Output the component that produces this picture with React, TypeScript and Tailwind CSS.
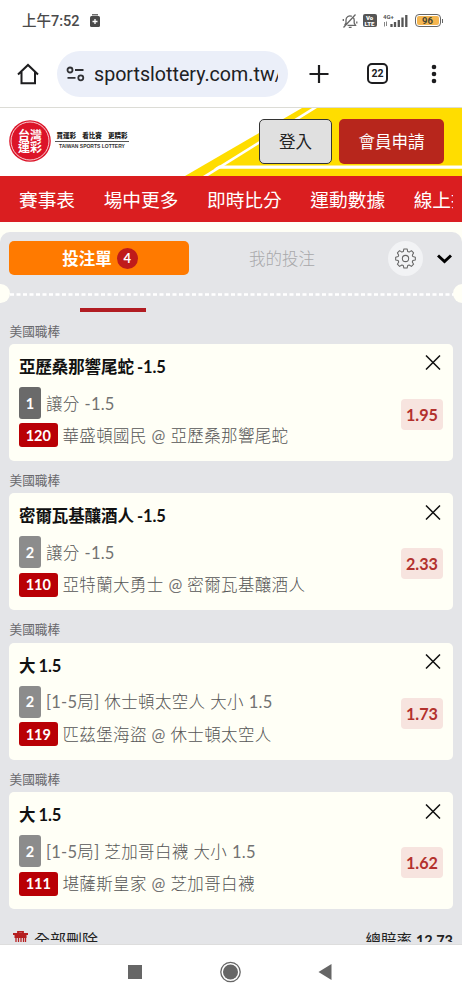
import React from "react";

const cjk = "font-['Lato','Noto_Sans_CJK_TC',sans-serif]";
const roboto = "font-['Roboto','Noto_Sans_CJK_TC',sans-serif]";

type Bet = {
  pick: string;
  code: string;
  codeColor: string;
  market: string;
  no: string;
  match: string;
  odds: string;
};

const bets: Bet[] = [
  { pick: "亞歷桑那響尾蛇 -1.5", code: "1", codeColor: "bg-[#6a6a6a]", market: "讓分 -1.5", no: "120", match: "華盛頓國民 @ 亞歷桑那響尾蛇", odds: "1.95" },
  { pick: "密爾瓦基釀酒人 -1.5", code: "2", codeColor: "bg-[#8c8c8c]", market: "讓分 -1.5", no: "110", match: "亞特蘭大勇士 @ 密爾瓦基釀酒人", odds: "2.33" },
  { pick: "大 1.5", code: "2", codeColor: "bg-[#8c8c8c]", market: "[1-5局] 休士頓太空人 大小 1.5", no: "119", match: "匹茲堡海盜 @ 休士頓太空人", odds: "1.73" },
  { pick: "大 1.5", code: "2", codeColor: "bg-[#8c8c8c]", market: "[1-5局] 芝加哥白襪 大小 1.5", no: "111", match: "堪薩斯皇家 @ 芝加哥白襪", odds: "1.62" },
];

// Light Chinese characters with regular-weight digits and signs.
function MixedText({ text }: { text: string }) {
  return (
    <span className="whitespace-pre pt-[2px] text-[16.500px] font-light tracking-[0.350px] text-[#555]">
      {text.split(/([!-~]+)/).map((part, i) =>
        i % 2 ? (
          <span key={i} className="font-normal tracking-[0.250px] text-[#727272]">{part}</span>
        ) : (
          part
        ),
      )}
    </span>
  );
}

function StatusBar() {
  return (
    <div className={`flex h-10 items-center pl-[22px] pr-[19px] pt-px text-[#4a4a4a] ${roboto}`}>
      <span className="w-[59px] whitespace-nowrap pt-[3px] text-[14.5px] font-medium leading-5">上午7:52</span>
      <svg className="ml-2 h-[14px] w-3" viewBox="0 0 12 14">
        <path d="M3 0.8h6" stroke="#4a4a4a" strokeWidth="1.2" />
        <rect x="1" y="2" width="10" height="11" rx="1.5" fill="#4a4a4a" />
        <path d="M6 5v5M3.5 7.5h5" stroke="#fff" strokeWidth="1.3" />
      </svg>
      <div className="ml-auto flex items-center">
        <svg className="h-4 w-4" viewBox="0 0 16 16" fill="none" stroke="#666" strokeWidth="1.3">
          <path d="M5.500 12.300h8l-1.300-2.300V7.200a4 4 0 0 0-1-2.700M9.800 3.300A4 4 0 0 0 4 7v2.800L2.700 12.300M6.800 14.300h2.800M1.500 14.500L13.500 1.500M14.800 8.500v2M1.300 8V6" />
        </svg>
        <div className="ml-[5px] flex h-[13px] w-[14px] flex-col items-center justify-center rounded-[2px] bg-[#555] text-[6px] font-black leading-[6px] text-white">
          <span>Vo</span>
          <span>LTE</span>
        </div>
        <svg className="ml-[6px] h-[14px] w-[25px]" viewBox="0 0 25 14">
          <text x="0" y="5" fontSize="6" fontWeight="700" fill="#555">4G+</text>
          <path d="M1.500 8v4.500M3.500 7.500v4.500" stroke="#777" strokeWidth="0.9" />
          <path d="M8.500 13v-3M12 13V8M15.800 13V6M19.500 13V3.500M23.300 13V1" stroke="#555" strokeWidth="2.300" />
        </svg>
        <div className="ml-[7px] flex h-[13px] w-[26px] items-center justify-center rounded-[4px] border-[1.5px] border-[#666] p-px">
          <div className="flex h-full w-full items-center justify-center rounded-[2px] bg-[#f5b650] text-[9.5px] font-bold leading-none text-[#443]">96</div>
        </div>
        <div className="ml-px h-1 w-[1.5px] bg-[#666]" />
      </div>
    </div>
  );
}

function BrowserBar() {
  return (
    <div className={`flex h-[68px] items-center border-b border-[#dcdcd6] text-[#202124] ${roboto}`}>
      <svg className="ml-[17px] h-[22px] w-[22px]" viewBox="0 0 22 22" fill="none" stroke="#1d1d1f" strokeWidth="2">
        <path d="M1 11.500L11 2l10 9.500M4.500 9v11.200h13.500V9" />
      </svg>
      <div className="ml-[18px] flex h-[46px] w-[231px] items-center rounded-full bg-[#ebeff9]">
        <svg className="ml-[9px] h-4 w-[19px]" viewBox="0 0 19 16" fill="none" stroke="#303134" strokeWidth="1.800">
          <circle cx="4" cy="4" r="2.500" />
          <path d="M9 4h8.500M1.500 11.800h8" />
          <circle cx="14.800" cy="11.800" r="2.500" />
        </svg>
        <span className="ml-[9px] w-[184px] overflow-hidden whitespace-nowrap pt-[2px] text-[19.650px] leading-7">sportslottery.com.tw/</span>
      </div>
      <svg className="ml-[21px] h-5 w-5" viewBox="0 0 20 20" stroke="#1d1d1f" strokeWidth="2.200">
        <path d="M10 1v18M0.500 10h19" />
      </svg>
      <div className="ml-[38px] flex h-[21px] w-[21px] items-center justify-center rounded-[5px] border-2 border-[#1d1d1f] pt-px text-[10.5px] font-bold leading-none">22</div>
      <svg className="ml-[43px] h-5 w-[6px]" viewBox="0 0 6 20" fill="#1d1d1f">
        <circle cx="3" cy="3" r="2.300" />
        <circle cx="3" cy="10" r="2.300" />
        <circle cx="3" cy="17" r="2.300" />
      </svg>
    </div>
  );
}

function Banner() {
  return (
    <header className="relative flex h-[68px] items-start bg-white">
      <svg className="absolute inset-0 h-full w-full" viewBox="0 0 462 68">
        <path d="M185 68L302 0H462V68z" fill="#ffdd00" />
        <path d="M208 68L317 0h-5L203 68z" fill="#fff" />
        <path d="M219 57.500H462v3.300H214z" fill="#fff" />
      </svg>
      <svg className="relative ml-[9px] mt-[12px] h-[42px] w-[42px] shrink-0" viewBox="0 0 42 42">
        <circle cx="21" cy="21" r="20.800" fill="#dc1428" />
        <circle cx="21" cy="21" r="19" fill="none" stroke="#fff" strokeWidth="0.800" />
        <text fill="#fff" fontFamily="Noto Sans CJK TC" fontWeight="700" fontSize="12" textAnchor="middle">
          <tspan x="21" y="19.800">台灣</tspan>
          <tspan x="21" y="32">運彩</tspan>
        </text>
      </svg>
      <div className="relative ml-[4px] mt-[22px] w-[74px]">
        <div className="flex h-[12px] items-center justify-between border-b border-[#555] px-[1.500px] font-['Noto_Sans_CJK_TC',sans-serif] text-[6.500px] font-black leading-none text-[#222]">
          <span>買運彩</span>
          <span>看比賽</span>
          <span>更精彩</span>
        </div>
        <div className="mt-[1px] whitespace-nowrap text-center font-['Liberation_Sans',sans-serif] text-[5px] font-bold leading-[7px] text-[#333]">TAIWAN SPORTS LOTTERY</div>
      </div>
      <button className={`absolute left-[259px] top-[11px] h-[45px] w-[73px] rounded-[5px] border border-[#333] bg-[#e0e0e0] pt-[2px] text-[16.500px] text-[#222] ${cjk}`}>登入</button>
      <button className={`absolute left-[339px] top-[11px] h-[45px] w-[105px] rounded-[5px] bg-[#b7261c] pt-[2px] text-[16.500px] text-white ${cjk}`}>會員申請</button>
    </header>
  );
}

function Nav() {
  return (
    <nav className={`h-[46px] bg-[#da1e20] pl-[19px] pr-[9px] ${cjk}`}>
      <div className="flex h-full items-center gap-[28.600px] overflow-hidden whitespace-nowrap pt-[3px] text-[18.700px] text-white">
        {["賽事表", "場中更多", "即時比分", "運動數據", "線上投注"].map((t) => (
          <span key={t} className="shrink-0">{t}</span>
        ))}
      </div>
    </nav>
  );
}

function BetCard({ bet }: { bet: Bet }) {
  return (
    <section>
      <h3 className="h-[32.400px] pl-[9.500px] pt-[8px] text-[12.700px] leading-[22px] text-[#68686c]">美國職棒</h3>
      <div className="ml-[9px] mr-[9.500px] flex h-[117px] rounded-[5px] bg-[#fffff6] pl-[10px]">
        <div className="flex-1">
          <div className="mt-[11px] h-6 text-[16.500px] font-bold leading-6 tracking-[-0.100px] text-[#111] [word-spacing:-0.800px]">{bet.pick}</div>
          <div className="mt-[8px] flex h-8 items-center gap-[5px]">
            <span className={`flex h-8 w-[22px] items-center justify-center rounded-[3px] pt-px text-[14.500px] font-bold text-white ${bet.codeColor}`}>{bet.code}</span>
            <MixedText text={bet.market} />
          </div>
          <div className="mt-[4.500px] flex h-6 items-center gap-[5px]">
            <span className="flex h-6 w-[38.500px] items-center justify-center rounded-[3px] bg-[#b90005] pt-px text-[14.500px] font-bold text-white">{bet.no}</span>
            <MixedText text={bet.match} />
          </div>
        </div>
        <div className="flex w-[52px] flex-col">
          <svg className="ml-[24.500px] mt-[11.500px] h-[15px] w-[16px]" viewBox="0 0 16 15" stroke="#111" strokeWidth="1.500">
            <path d="M1 0.500l14 14M15 0.500l-14 14" />
          </svg>
          <span className="ml-[0.500px] mt-[28.500px] flex h-[31px] w-[42px] items-center justify-center rounded-[4px] bg-[#f7e4df] pt-px text-[16.200px] font-bold text-[#b3312d]">{bet.odds}</span>
        </div>
      </div>
    </section>
  );
}

function SlipHeader() {
  return (
    <div className="relative">
      <div className="flex h-[61px] items-center pb-[9px] pl-[9px]">
        <button className="flex h-[34px] w-[180px] items-center justify-center gap-[5px] rounded-[5px] bg-[#ff7a00] pl-[2px] text-[16.500px] font-bold text-white">
          <span className="pt-[2px]">投注單</span>
          <span className="flex h-[21px] w-[21px] items-center justify-center rounded-full bg-[#bf1b1a] pt-px text-[13px]">4</span>
        </button>
        <span className="ml-[60px] pt-[2px] text-[16.500px] font-light text-[#a8a8aa]">我的投注</span>
        <span className="ml-[73px] flex h-[35px] w-[35px] items-center justify-center rounded-full bg-[#f2f3f5]">
          <svg className="h-[21px] w-[21px]" viewBox="0 0 22 22" fill="none" stroke="#666" strokeWidth="1.100" strokeLinejoin="round">
            <circle cx="11" cy="11" r="3.300" />
            <path d="M9.300 1h3.400l.6 2.700 1.500.6 2.400-1.500 2.300 2.300-1.400 2.400.6 1.500 2.600.6v2.900l-2.600.6-.6 1.500 1.400 2.400-2.300 2.300-2.400-1.500-1.500.6-.6 2.600H9.300l-.6-2.600-1.500-.6-2.400 1.500-2.300-2.300 1.400-2.400-.6-1.500L.7 12.500V9.600L3.300 9l.6-1.500-1.400-2.400 2.300-2.300 2.400 1.500 1.500-.6z" />
          </svg>
        </span>
        <svg className="ml-[14px] mt-[2px] h-[10px] w-[15px]" viewBox="0 0 15 10" fill="none" stroke="#000" strokeWidth="3">
          <path d="M1 1.500l6.500 6 6.500-6" />
        </svg>
      </div>
      <svg className="block h-[3px] w-full" viewBox="0 0 462 3">
        <path d="M10 1.500H454" stroke="#fff" strokeWidth="2.500" strokeDasharray="4 2.500" />
      </svg>
      <div className="absolute -left-[9px] top-[52px] h-[19px] w-[19px] rounded-full bg-[#fffff6]" />
      <div className="absolute -right-[10px] top-[52px] h-[19px] w-[19px] rounded-full bg-[#fffff6]" />
      <div className="ml-[80px] mt-[12px] h-[3.500px] w-[66px] bg-[#b11c22]" />
    </div>
  );
}

export default function App() {
  return (
    <div className="flex h-[1000px] w-[462px] flex-col overflow-hidden bg-white">
      <StatusBar />
      <BrowserBar />
      <Banner />
      <Nav />
      <main className={`h-[722px] shrink-0 overflow-hidden bg-[#fffff6] pt-[10px] ${cjk}`}>
        <div className="h-full overflow-hidden rounded-t-[10px] bg-[#e4e5e8]">
          <SlipHeader />
          {bets.map((b) => (
            <BetCard key={b.no} bet={b} />
          ))}
          <footer className="mt-[20px] flex h-[13px] items-start justify-between overflow-hidden pl-[13px] pr-[9px] leading-[22px] text-[#222]">
            <div className="flex items-start text-[16px]">
              <svg className="mt-[2px] h-[18px] w-[15px]" viewBox="0 0 15 18" fill="none" stroke="#b51f20">
                <path d="M5 2V.8h5V2M0 3h15" strokeWidth="1.800" />
                <path d="M1.500 5.500h12" strokeWidth="3" />
                <path d="M3 5v12M5.500 5v12M8 5v12M10.500 5v12M12.500 5v12" strokeWidth="1.300" />
              </svg>
              <span className="ml-[6px]">全部刪除</span>
            </div>
            <span className="text-[15.500px]">總賠率 <b className="text-[14.500px]">12.73</b></span>
          </footer>
        </div>
      </main>
      <div className="flex h-[56px] shrink-0 items-start border-t border-[#ddd] bg-white">
        <svg className="mt-[15px] h-[24px] w-full" viewBox="0 0 462 24" fill="#666">
          <rect x="128" y="5" width="14" height="14" />
          <circle cx="230.500" cy="12" r="9.700" fill="none" stroke="#666" strokeWidth="1.300" />
          <circle cx="230.500" cy="12" r="7.500" />
          <path d="M318.500 12l13-8v16z" />
        </svg>
      </div>
    </div>
  );
}
